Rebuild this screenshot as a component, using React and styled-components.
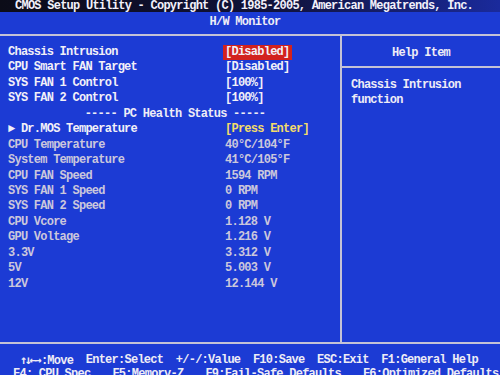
import styled, { createGlobalStyle } from "styled-components";

const GlobalStyle = createGlobalStyle`
  html, body {
    margin: 0;
    padding: 0;
    background: #1c3bd4;
  }
`;

/* PANTALLA */
const Screen = styled.div`
  width: 500px;
  height: 375px;
  overflow: hidden;
  background: #1c3bd4;
  font-family: "Liberation Mono", "DejaVu Sans Mono", monospace;
  font-weight: bold;
  font-size: 12px;
  letter-spacing: -0.75px;
  color: #eeecf6;
  display: flex;
  flex-direction: column;

  & > * {
    flex-shrink: 0;
  }
`;

const TitleBar = styled.div`
  height: 12px;
  line-height: 12px;
  padding-left: 15px;
  white-space: pre;
  background: linear-gradient(to right, #0c0c18 0%, #10123a 55%, #1a2a9c 100%);
  color: #f2f0fa;
`;

const SubTitle = styled.div`
  height: 22px;
  line-height: 21px;
  text-align: center;
  padding-right: 10px;
`;

const Rule = styled.div`
  height: 2px;
  background: #c4c2d6;
`;

/* AREA PRINCIPAL */
const Main = styled.div`
  height: 306px;
  display: grid;
  grid-template-columns: 340px 2px 1fr;
`;

const Divider = styled.div`
  background: #c4c2d6;
`;

const List = styled.div`
  padding-top: 9px;
`;

const Row = styled.div`
  display: grid;
  grid-template-columns: 215px auto;
  height: 15.45px;
  line-height: 15.45px;
  padding-left: 8px;
  white-space: pre;
  color: ${(p) => (p.$dim ? "#cbc7dc" : "#f2f0f8")};
`;

const Value = styled.span`
  justify-self: start;
  padding: 0 2px;
  color: ${(p) => (p.$yellow ? "#f3dc6a" : "inherit")};
  background: ${(p) => (p.$selected ? "#d2221e" : "transparent")};
`;

const Section = styled.div`
  height: 15.45px;
  line-height: 15.45px;
  text-align: center;
  padding-left: 10px;
  white-space: pre;
`;

const HelpPanel = styled.div`
  display: flex;
  flex-direction: column;
`;

const HelpHead = styled.div`
  height: 30px;
  line-height: 34px;
  text-align: center;
  border-bottom: 2px solid #c4c2d6;
`;

const HelpText = styled.div`
  padding: 10px 0 0 9px;
  line-height: 15.4px;
`;

/* PIE */
const Footer = styled.div`
  padding-top: 9px;
`;

const KeyLine = styled.div`
  display: flex;
  gap: ${(p) => p.$gap}px;
  padding-left: ${(p) => p.$left}px;
  height: 14px;
  line-height: 14px;
  white-space: pre;
`;

const Arrows = styled.span`
  font-family: "DejaVu Sans Mono", monospace;
  letter-spacing: -2.5px;
  margin-right: 2px;
`;

const settings = [
  { label: "Chassis Intrusion", value: "[Disabled]", selected: true },
  { label: "CPU Smart FAN Target", value: "[Disabled]" },
  { label: "SYS FAN 1 Control", value: "[100%]" },
  { label: "SYS FAN 2 Control", value: "[100%]" },
];

const health = [
  ["CPU Temperature", "40°C/104°F"],
  ["System Temperature", "41°C/105°F"],
  ["CPU FAN Speed", "1594 RPM"],
  ["SYS FAN 1 Speed", "0 RPM"],
  ["SYS FAN 2 Speed", "0 RPM"],
  ["CPU Vcore", "1.128 V"],
  ["GPU Voltage", "1.216 V"],
  ["3.3V", "3.312 V"],
  ["5V", "5.003 V"],
  ["12V", "12.144 V"],
];

const App = () => {
  return (
    <Screen>
      <GlobalStyle />
      <TitleBar>CMOS Setup Utility - Copyright (C) 1985-2005, American Megatrends, Inc.</TitleBar>
      <SubTitle>H/W Monitor</SubTitle>
      <Rule />

      <Main>
        <List>
          {settings.map((s) => (
            <Row key={s.label}>
              <span>{s.label}</span>
              <Value $selected={s.selected}>{s.value}</Value>
            </Row>
          ))}
          <Section>----- PC Health Status -----</Section>
          <Row>
            <span>► Dr.MOS Temperature</span>
            <Value $yellow>[Press Enter]</Value>
          </Row>
          {health.map(([label, value]) => (
            <Row key={label} $dim>
              <span>{label}</span>
              <Value>{value}</Value>
            </Row>
          ))}
        </List>

        <Divider />

        <HelpPanel>
          <HelpHead>Help Item</HelpHead>
          <HelpText>
            Chassis Intrusion
            <br />
            function
          </HelpText>
        </HelpPanel>
      </Main>

      <Rule />

      <Footer>
        <KeyLine $gap={12.6} $left={20}>
          <span>
            <Arrows>↑↓←→</Arrows>:Move
          </span>
          <span>Enter:Select</span>
          <span>+/-/:Value</span>
          <span>F10:Save</span>
          <span>ESC:Exit</span>
          <span>F1:General Help</span>
        </KeyLine>
        <KeyLine $gap={22} $left={13}>
          <span>F4: CPU Spec</span>
          <span>F5:Memory-Z</span>
          <span>F9:Fail-Safe Defaults</span>
          <span>F6:Optimized Defaults</span>
        </KeyLine>
      </Footer>
    </Screen>
  );
};

export default App;
